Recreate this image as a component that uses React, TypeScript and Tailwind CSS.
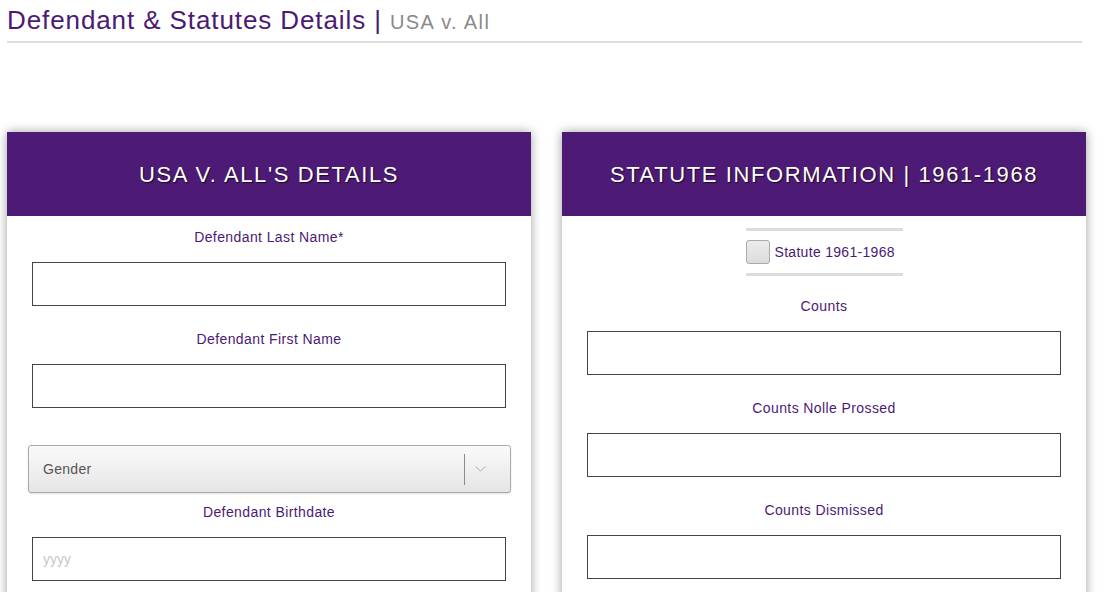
import React from 'react'

const font = { fontFamily: '"Liberation Sans", Arial, sans-serif' }

function Label({ text }: { text: string }) {
  return (
    <div className="h-5 text-center text-[14px] leading-5 tracking-[0.4px] text-[#4b1a75]">{text}</div>
  )
}

function TextInput({ placeholder }: { placeholder?: string }) {
  return (
    <div className="mx-[25px] h-[44px] border border-[#444] bg-white">
      <input
        placeholder={placeholder}
        className="h-full w-full bg-transparent px-[10px] text-[14px] text-[#333] outline-none placeholder:text-[#c8c8c8]"
        style={font}
      />
    </div>
  )
}

function CardHeader({ title }: { title: string }) {
  return (
    <div className="flex h-[84px] items-center justify-center bg-[#4d1a76]">
      <h2 className="text-[22px] tracking-[1.6px] text-white uppercase [text-shadow:1px_1px_1px_rgba(0,0,0,0.7)]">
        {title}
      </h2>
    </div>
  )
}

export default function App() {
  return (
    <div className="min-h-[592px] bg-white pl-[7px]" style={font}>
      {/* Page title */}
      <div className="w-[1075px] border-b-2 border-[#dedede] pt-[5px] pb-[4px]">
        <h1 className="text-[26px] leading-[30px] tracking-[0.9px] text-[#4b1a75]">
          Defendant &amp; Statutes Details |{' '}
          <span className="text-[20px] tracking-[1.4px] text-[#8a8a8a]">USA v. All</span>
        </h1>
      </div>

      <div className="mt-[89px] flex gap-[31px]">
        {/* Defendant card */}
        <div className="w-[524px] bg-white shadow-[0_0_10px_rgba(0,0,0,0.38)]">
          <CardHeader title="USA v. All's Details" />
          <div className="pt-[11px] pb-6">
            <Label text="Defendant Last Name*" />
            <div className="mt-[15px]">
              <TextInput />
            </div>
            <div className="mt-[23px]">
              <Label text="Defendant First Name" />
            </div>
            <div className="mt-[15px]">
              <TextInput />
            </div>

            <div className="mt-[37px] mr-[20px] ml-[21px] flex h-[48px] items-center rounded-[3px] border border-[#aaa] bg-gradient-to-b from-[#fafafa] to-[#e5e5e5] shadow-[0_1px_2px_rgba(0,0,0,0.12)]">
              <span className="flex-1 pl-[14px] text-[14px] tracking-[0.3px] text-[#555]">Gender</span>
              <div className="h-[31px] w-px bg-[#8c8c8c]" />
              <div className="flex w-[45px] items-center pl-[10px]">
                <svg width="11" height="6" viewBox="0 0 11 6" fill="none">
                  <path d="M0.5 0.5l5 4.5l5-4.5" stroke="#b0b0b0" strokeWidth="1" />
                </svg>
              </div>
            </div>

            <div className="mt-[9px]">
              <Label text="Defendant Birthdate" />
            </div>
            <div className="mt-[15px]">
              <TextInput placeholder="yyyy" />
            </div>
          </div>
        </div>

        {/* Statute card */}
        <div className="w-[524px] bg-white shadow-[0_0_10px_rgba(0,0,0,0.38)]">
          <CardHeader title="Statute Information | 1961-1968" />
          <div className="pt-3 pb-6">
            <div className="mx-auto w-[157px] border-y-[3px] border-[#dcdcdc] py-[9px]">
              <label className="flex items-center gap-[5px]">
                <span className="h-6 w-6 rounded-[3px] border border-[#aaa] bg-gradient-to-b from-[#ececec] to-[#dcdcdc]" />
                <span className="text-[14px] tracking-[0.3px] text-[#4b1a75]">Statute 1961-1968</span>
              </label>
            </div>
            <div className="mt-5">
              <Label text="Counts" />
            </div>
            <div className="mt-[15px]">
              <TextInput />
            </div>
            <div className="mt-[23px]">
              <Label text="Counts Nolle Prossed" />
            </div>
            <div className="mt-[15px]">
              <TextInput />
            </div>
            <div className="mt-[23px]">
              <Label text="Counts Dismissed" />
            </div>
            <div className="mt-[15px]">
              <TextInput />
            </div>
          </div>
        </div>
      </div>
    </div>
  )
}
